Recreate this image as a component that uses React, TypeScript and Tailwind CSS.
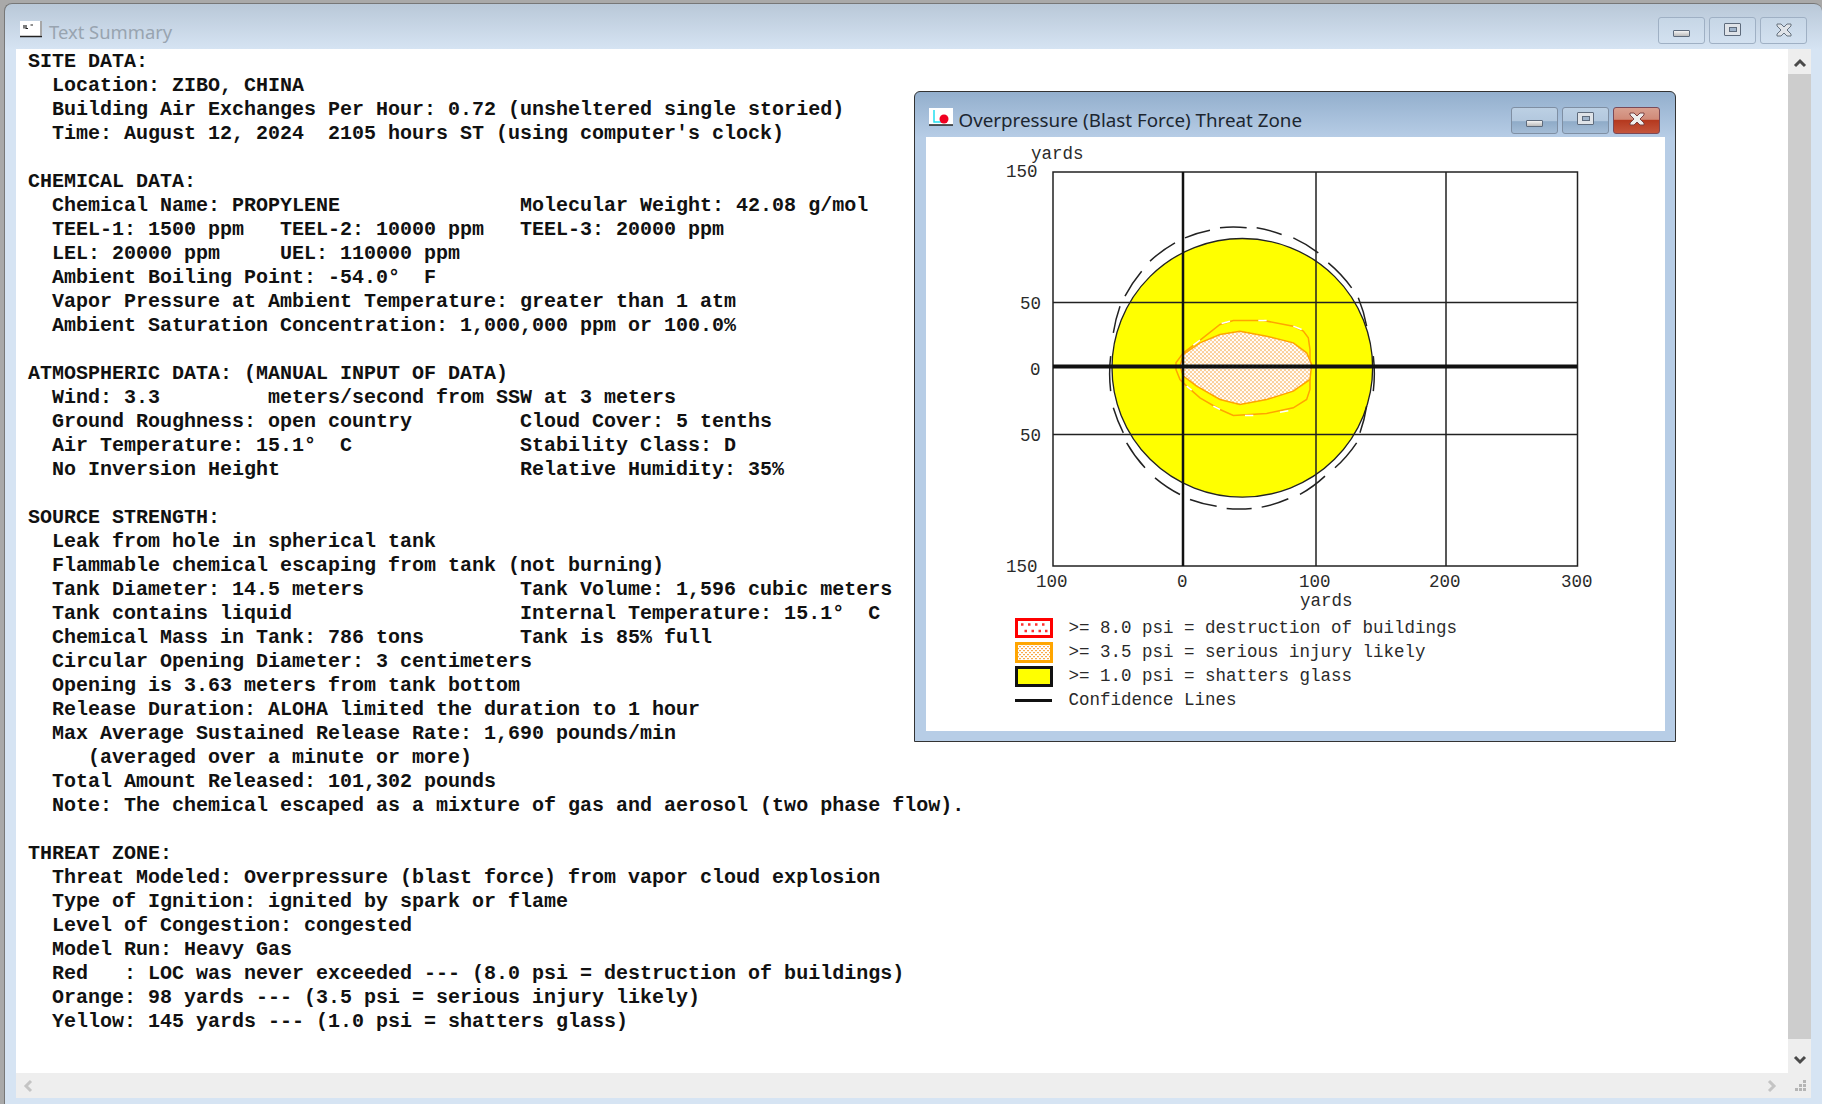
import { type ReactElement } from 'react'

const summary = `SITE DATA:
  Location: ZIBO, CHINA
  Building Air Exchanges Per Hour: 0.72 (unsheltered single storied)
  Time: August 12, 2024  2105 hours ST (using computer's clock)

CHEMICAL DATA:
  Chemical Name: PROPYLENE               Molecular Weight: 42.08 g/mol
  TEEL-1: 1500 ppm   TEEL-2: 10000 ppm   TEEL-3: 20000 ppm
  LEL: 20000 ppm     UEL: 110000 ppm
  Ambient Boiling Point: -54.0°  F
  Vapor Pressure at Ambient Temperature: greater than 1 atm
  Ambient Saturation Concentration: 1,000,000 ppm or 100.0%

ATMOSPHERIC DATA: (MANUAL INPUT OF DATA)
  Wind: 3.3         meters/second from SSW at 3 meters
  Ground Roughness: open country         Cloud Cover: 5 tenths
  Air Temperature: 15.1°  C              Stability Class: D
  No Inversion Height                    Relative Humidity: 35%

SOURCE STRENGTH:
  Leak from hole in spherical tank
  Flammable chemical escaping from tank (not burning)
  Tank Diameter: 14.5 meters             Tank Volume: 1,596 cubic meters
  Tank contains liquid                   Internal Temperature: 15.1°  C
  Chemical Mass in Tank: 786 tons        Tank is 85% full
  Circular Opening Diameter: 3 centimeters
  Opening is 3.63 meters from tank bottom
  Release Duration: ALOHA limited the duration to 1 hour
  Max Average Sustained Release Rate: 1,690 pounds/min
     (averaged over a minute or more)
  Total Amount Released: 101,302 pounds
  Note: The chemical escaped as a mixture of gas and aerosol (two phase flow).

THREAT ZONE:
  Threat Modeled: Overpressure (blast force) from vapor cloud explosion
  Type of Ignition: ignited by spark or flame
  Level of Congestion: congested
  Model Run: Heavy Gas
  Red   : LOC was never exceeded --- (8.0 psi = destruction of buildings)
  Orange: 98 yards --- (3.5 psi = serious injury likely)
  Yellow: 145 yards --- (1.0 psi = shatters glass)`

// confidence line dashes, measured on the 3x crop of the plot
const dashes = [
  [420, 55, 500, 55], [530, 55, 605, 75], [640, 85, 715, 130], [745, 160, 815, 235],
  [835, 265, 860, 350], [880, 440, 880, 545], [860, 590, 840, 670], [830, 700, 765, 775],
  [735, 800, 660, 855], [625, 868, 545, 893], [515, 897, 440, 897], [410, 890, 330, 870],
  [300, 855, 225, 805], [195, 775, 140, 700], [130, 670, 100, 595], [92, 545, 92, 440],
  [100, 370, 120, 290], [135, 260, 185, 185], [210, 155, 285, 100], [315, 85, 390, 62],
]

const WinButton = ({ kind, active }: { kind: 'min' | 'max' | 'close'; active?: boolean }): ReactElement => {
  const isRed = kind === 'close' && active
  const bg = isRed
    ? 'bg-[linear-gradient(#d9a090_0%,#d08a78_45%,#b5391f_50%,#c4553c_100%)] border-[#7a4a58]'
    : active
      ? 'bg-[linear-gradient(#bcd0e4_0%,#b3c8de_50%,#8fabc8_55%,#a4bcd6_100%)] border-[#7f8fa3]'
      : 'bg-[linear-gradient(#c6d6e6,#d3e1f0)] border-[#9fb0c4]'
  return (
    <div className={`flex h-[27px] w-[47px] items-center justify-center rounded-[3px] border-[1.5px] ${bg}`}>
      {kind === 'min' && (
        <div className="mt-[6px] h-[7px] w-[17px] rounded-[1px] border border-[#5e6b7c] bg-[linear-gradient(#f4f4f4,#bbbbbb)]" />
      )}
      {kind === 'max' && (
        <div className="mb-[3px] flex h-[13px] w-[17px] items-center justify-center rounded-[1px] border border-[#5e6b7c] bg-[#dfe3e8]">
          <div className="h-[5px] w-[8px] border border-[#5e6b7c] bg-[#9fb4cb]" />
        </div>
      )}
      {kind === 'close' && (
        <svg width="18" height="14" viewBox="0 0 18 14" className="mb-[2px]">
          <path
            d="M2 1h4l3 3 3-3h4v2l-4 4 4 4v2h-4l-3-3-3 3H2v-2l4-4-4-4z"
            fill={active ? '#eeeeee' : '#dfe3e8'}
            stroke={active ? '#7a4040' : '#66727f'}
          />
        </svg>
      )}
    </div>
  )
}

const ThreatPlot = (): ReactElement => {
  const labels = 'font-["Liberation_Mono",monospace] text-[17.5px] fill-[#2a2a2a]'
  return (
    <svg width="738" height="476" className="block">
      <defs>
        <pattern id="dots" width="12" height="12" patternUnits="userSpaceOnUse">
          <rect width="12" height="12" fill="#ffffff" />
          <rect x="0" y="0" width="6" height="3.5" fill="#f9a94a" />
          <rect x="6" y="6" width="6" height="3.5" fill="#f9a94a" />
        </pattern>
      </defs>
      <text x="105" y="22" className={labels}>yards</text>
      <text x="80" y="40" className={labels}>150</text>
      <text x="94" y="172" className={labels}>50</text>
      <text x="104" y="238" className={labels}>0</text>
      <text x="94" y="304" className={labels}>50</text>
      <text x="80" y="435" className={labels}>150</text>
      <text x="110" y="450" className={labels}>100</text>
      <text x="251" y="450" className={labels}>0</text>
      <text x="373" y="450" className={labels}>100</text>
      <text x="503" y="450" className={labels}>200</text>
      <text x="635" y="450" className={labels}>300</text>
      <text x="374" y="469" className={labels}>yards</text>

      <rect x="127" y="35" width="524.5" height="394" fill="#ffffff" stroke="#222222" strokeWidth="1.5" />
      <g transform="translate(154 72.5) scale(0.3333)">
        <ellipse cx="487" cy="475" rx="391" ry="388" fill="#ffff00" stroke="#222222" strokeWidth="4" />
        <path
          d="M288 460L310 430L350 400L420 345L460 333H550L640 350L670 365L685 385L690 420V540L680 570L640 595L560 612L460 618L420 600L360 565L320 530L300 510L288 480Z"
          fill="#ffff00"
          stroke="#ffa500"
          strokeWidth="4.5"
        />
        <path
          d="M310 435L360 400L420 375L480 365L560 380L640 400L680 430L695 465L690 510L640 545L560 570L480 585L420 570L350 530L310 500L300 470Z"
          fill="url(#dots)"
          stroke="#ffa500"
          strokeWidth="4.5"
        />
        <path
          d="M340 407L360 392M425 342L450 335M535 333H560M640 350L665 360M320 530L335 542M400 590L420 600M495 618H520M600 608L625 604"
          fill="none"
          stroke="#ffffff"
          strokeWidth="4.5"
        />
        {dashes.map(([x1, y1, x2, y2], i) => (
          <path
            key={i}
            d={`M${x1} ${y1}A395 422 0 0 1 ${x2} ${y2}`}
            fill="none"
            stroke="#222222"
            strokeWidth="4.5"
          />
        ))}
      </g>
      <path d="M127 165.5H651M127 297.5H651" stroke="#222222" strokeWidth="1.5" />
      <path d="M390 35V429M520 35V429" stroke="#222222" strokeWidth="1.5" />
      <path d="M257 35V429" stroke="#111111" strokeWidth="2.5" />
      <path d="M127 229.5H651" stroke="#111111" strokeWidth="4" />
    </svg>
  )
}

const RedSwatch = (): ReactElement => (
  <svg width="38" height="20" viewBox="0 0 38 20" className="block">
    <rect x="1.5" y="1.5" width="35" height="17" fill="#ffffff" stroke="#ff0000" strokeWidth="3" />
    <path
      d="M6 6.5h2.5M13 6.5h2.5M20 6.5h2.5M27 6.5h2.5M9.5 13h2.5M16.5 13h2.5M23.5 13h2.5M30 13h2.5"
      stroke="#ff3030"
      strokeWidth="2.5"
    />
  </svg>
)

const OrangeSwatch = (): ReactElement => (
  <svg width="38" height="21" viewBox="0 0 38 21" className="block">
    <defs>
      <pattern id="dots-legend" width="4" height="4" patternUnits="userSpaceOnUse">
        <rect width="4" height="4" fill="#ffffff" />
        <rect width="2" height="1.2" fill="#f9a94a" />
        <rect x="2" y="2" width="2" height="1.2" fill="#f9a94a" />
      </pattern>
    </defs>
    <rect x="1.5" y="1.5" width="35" height="18" fill="url(#dots-legend)" stroke="#ffa500" strokeWidth="3" />
  </svg>
)

const LegendRow = ({ swatch, label }: { swatch: ReactElement; label: string }): ReactElement => (
  <div className="flex h-[24px] items-center">
    <div className="flex w-[54px] shrink-0 items-center">{swatch}</div>
    <span className="whitespace-pre text-[17.5px] leading-[24px] text-[#2a2a2a]">{label}</span>
  </div>
)

export default function App(): ReactElement {
  return (
    <div className="relative h-[1104px] w-[1822px] overflow-hidden bg-[#a9a9a9] pl-[4px] pt-[3px]">
      <div className="flex h-full flex-col rounded-tl-[8px] rounded-tr-[8px] border-l border-t border-[#777777] bg-[#d6e4f3] bg-[linear-gradient(#b9c8d8_0px,#d6e4f3_46px)] px-[11px] pb-[6px]">
        <div className="flex h-[45px] shrink-0 items-center">
          <svg width="24" height="18" viewBox="0 0 24 18" className="ml-[3px] mt-[7px]">
            <rect x="1" y="0" width="22" height="16" fill="#ffffff" />
            <path d="M1 15.5H23" stroke="#222222" strokeWidth="1.5" />
            <path d="M22 0V15" stroke="#8a8a8a" strokeWidth="1.5" />
            <path d="M5 4V7.5M7 4V7.5H9M11.5 4H14" fill="none" stroke="#222222" strokeWidth="1.2" />
          </svg>
          <span className="ml-[6px] mt-[10px] font-['Noto_Sans',sans-serif] text-[18.4px] text-[#98a4b0]">Text Summary</span>
          <div className="ml-auto mr-[4px] mt-[8px] flex gap-[4px]">
            <WinButton kind="min" />
            <WinButton kind="max" />
            <WinButton kind="close" />
          </div>
        </div>
        <div className="flex min-h-0 flex-1 flex-col">
          <div className="flex min-h-0 flex-1">
            <div className="flex-1 bg-white pl-[12px] pt-px">
              <pre className="font-['Liberation_Mono',monospace] text-[20px] font-bold leading-[24px] text-[#111111]">{summary}</pre>
            </div>
            <div className="flex w-[23px] flex-col items-center bg-[#eeeeee]">
              <svg width="14" height="10" viewBox="0 0 14 10" className="mt-[9px]">
                <path d="M2 8L7 3L12 8" fill="none" stroke="#4a4a4a" strokeWidth="3" />
              </svg>
              <div className="mt-[6px] w-full flex-1 bg-[#cdcdcd]" />
              <svg width="14" height="10" viewBox="0 0 14 10" className="mb-[8px] mt-[16px]">
                <path d="M2 2L7 7L12 2" fill="none" stroke="#4a4a4a" strokeWidth="3" />
              </svg>
            </div>
          </div>
          <div className="flex h-[25px] shrink-0 items-center justify-between bg-[#eeeeee] pl-[7px] pr-[3px]">
            <svg width="10" height="14" viewBox="0 0 10 14">
              <path d="M8 2L3 7L8 12" fill="none" stroke="#c4c4c4" strokeWidth="3" />
            </svg>
            <div className="flex items-center gap-[17px]">
              <svg width="10" height="14" viewBox="0 0 10 14">
                <path d="M2 2L7 7L2 12" fill="none" stroke="#c4c4c4" strokeWidth="3" />
              </svg>
              <svg width="14" height="14" viewBox="0 0 14 14" fill="#b5b5b5">
                <rect x="9" y="1" width="3" height="3" />
                <rect x="5" y="5" width="3" height="3" />
                <rect x="9" y="5" width="3" height="3" />
                <rect x="1" y="9" width="3" height="3" />
                <rect x="5" y="9" width="3" height="3" />
                <rect x="9" y="9" width="3" height="3" />
              </svg>
            </div>
          </div>
        </div>
      </div>

      {/* child window floats over the text */}
      <div className="absolute left-[914px] top-[91px] flex h-[651px] w-[762px] flex-col rounded-tl-[6px] rounded-tr-[6px] border-[1.5px] border-[#333333] bg-[#b7cde6] bg-[linear-gradient(#93afcd_0px,#b7cde6_46px)] pb-[10px] pl-[10.5px] pr-[10px]">
        <div className="flex h-[45px] shrink-0 items-center">
          <svg width="24" height="20" viewBox="0 0 24 20" className="ml-[3px] mt-[6px]">
            <rect width="24" height="17" fill="#ffffff" />
            <path d="M5 2V14H12" fill="none" stroke="#22e0f0" strokeWidth="1.5" />
            <circle cx="15" cy="11" r="4.5" fill="#f00020" />
            <path d="M0 17H24" stroke="#222222" strokeWidth="1.5" />
          </svg>
          <span className="ml-[6px] mt-[11px] font-['Noto_Sans',sans-serif] text-[18.8px] text-[#1c2630]">
            Overpressure (Blast Force) Threat Zone
          </span>
          <div className="ml-auto mr-[5px] mt-[11px] flex gap-[4px]">
            <WinButton kind="min" active />
            <WinButton kind="max" active />
            <WinButton kind="close" active />
          </div>
        </div>
        <div className="flex-1 bg-white font-['Liberation_Mono',monospace]">
          <ThreatPlot />
          <div className="ml-[89px] mt-[3px]">
            <LegendRow label=">= 8.0 psi = destruction of buildings" swatch={<RedSwatch />} />
            <LegendRow label=">= 3.5 psi = serious injury likely" swatch={<OrangeSwatch />} />
            <LegendRow
              label=">= 1.0 psi = shatters glass"
              swatch={<div className="h-[21px] w-[38px] border-[3px] border-[#111111] bg-[#ffff00]" />}
            />
            <LegendRow label="Confidence Lines" swatch={<div className="h-[3px] w-[37px] bg-[#111111]" />} />
          </div>
        </div>
      </div>
    </div>
  )
}
